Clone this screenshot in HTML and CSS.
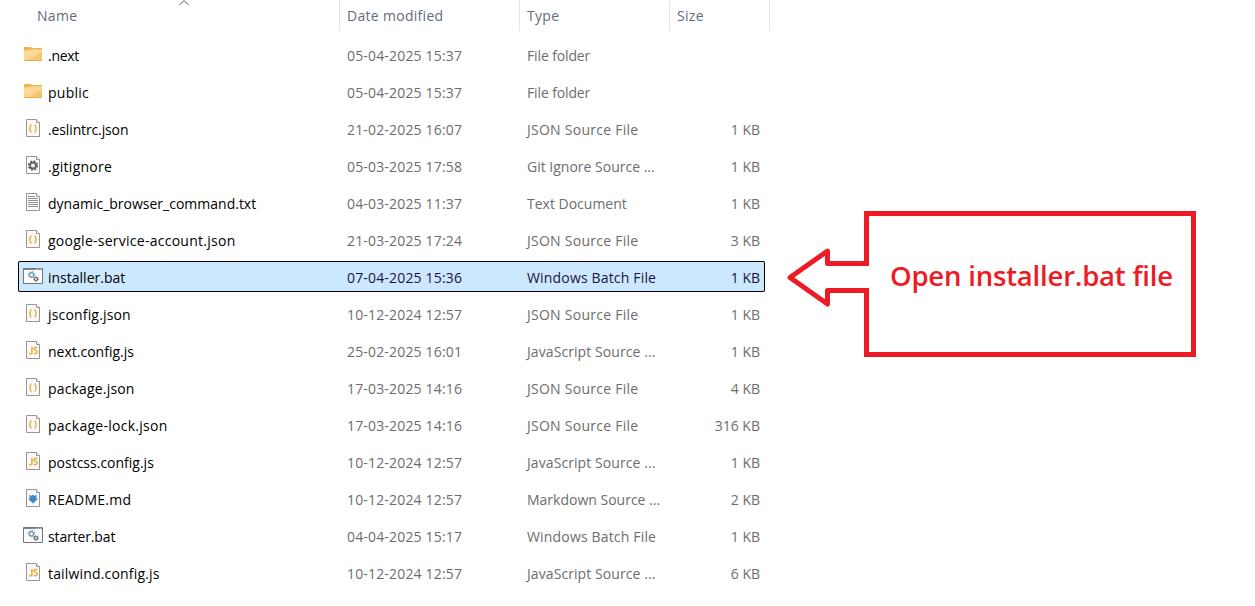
FILE: index.html
```
<!DOCTYPE html>
<html lang="en">
<head>
<meta charset="utf-8">
<title>Files</title>
<link rel="stylesheet" href="styles.css">
</head>
<body>
<svg class="sprite" aria-hidden="true">
  <symbol id="folder" viewBox="0 0 20 18">
    <path d="M1 2h7l1 1h10v13H1z" fill="#f5c869"/>
    <path d="M1 2h7v3H1z" fill="#ecb54d"/>
    <path d="M8 3h11v1.3H8z" fill="#ecb74f"/>
    <path d="M1 6l8-1.500h10V15H1z" fill="#ffd795"/>
    <path d="M19 7v8H5z" fill="#f6c871"/>
    <path d="M1 15h18v1H1z" fill="#e6ad48"/>
  </symbol>
  <symbol id="page" viewBox="0 0 20 18">
    <path d="M3.500.5h10l3 3v14h-13z" fill="#fafafa" stroke="#9a939a"/>
    <path d="M13.500.5v3h3" fill="#fff" stroke="#9a939a"/>
  </symbol>
  <symbol id="json" viewBox="0 0 20 18">
    <use href="#page"/>
    <path d="M8.700 6c-1.500 0-1.300.7-1.300 1.700S7.200 9.400 6.200 9.500c1 .1 1.200.8 1.200 1.800s-.2 1.700 1.300 1.700M11.300 6c1.500 0 1.300.7 1.300 1.700s.2 1.700 1.200 1.800c-1 .1-1.200.8-1.200 1.800s.2 1.700-1.300 1.700" fill="none" stroke="#e6b74a" stroke-width="1.500"/>
  </symbol>
  <symbol id="js" viewBox="0 0 20 18">
    <use href="#page"/>
    <path d="M8.900 6v5.200c0 1.200-.8 1.800-2.900 1.400M14.500 6.800c-3-.9-4 .2-3.300 1.500.6 1 3.300 1 3.100 2.700-.2 1.700-2.100 1.800-3.800 1.300" fill="none" stroke="#e6b74a" stroke-width="1.700"/>
  </symbol>
  <symbol id="gear" viewBox="0 0 20 18">
    <use href="#page"/>
    <circle cx="10" cy="9.500" r="4.300" fill="none" stroke="#5c6469" stroke-width="1.800" stroke-dasharray="1.800 1.577"/>
    <circle cx="10" cy="9.500" r="3" fill="none" stroke="#5c6469" stroke-width="1.900"/>
  </symbol>
  <symbol id="text" viewBox="0 0 20 18">
    <use href="#page"/>
    <path d="M5 3.500h7M5 5.500h10M5 7.500h10M5 9.500h10M5 11.500h10M5 13.500h10" stroke="#919191"/>
  </symbol>
  <symbol id="markdown" viewBox="0 0 20 18">
    <use href="#page"/>
    <path d="M6.500 5.500L8.300 7 10 5.500 11.700 7l1.800-1.500v4.300H15L10 14.500 5 9.800h1.500z" fill="#4387ce"/>
  </symbol>
  <symbol id="batch" viewBox="0 0 20 18">
    <path d="M.5 1.500h19v15H.5z" fill="#fbfbfb" stroke="#73777b"/>
    <path d="M1 2.200h18" stroke="#73777b" stroke-width="1.400"/>
    <path d="M13 2.200h5" stroke="#eee" stroke-dasharray="1 1"/>
    <circle cx="8.500" cy="7.700" r="2.100" fill="none" stroke="#709abb" stroke-width="1.200"/>
    <circle cx="8.500" cy="7.700" r="3" fill="none" stroke="#709abb" stroke-width="1.200" stroke-dasharray="1.200 1.156"/>
    <circle cx="13" cy="12" r="1.500" fill="none" stroke="#5b6268" stroke-width="1.100"/>
    <circle cx="13" cy="12" r="2.300" fill="none" stroke="#5b6268" stroke-dasharray="1 .806"/>
  </symbol>
</svg>
<div class="screen">
  <main class="files">
    <header class="head">
      <span class="head-name">Name<svg class="sort" viewBox="0 0 10 6"><path d="M.5 5L5 .5 9.500 5" fill="none" stroke="#5d5659"/></svg></span>
      <span class="head-date">Date modified</span><span class="head-type">Type</span><span class="head-size">Size</span>
    </header>
    <div class="row"><svg><use href="#folder"/></svg><span class="name tighter">.next</span><span class="date">05-04-2025 15:37</span><span class="type tight">File folder</span><span class="size"></span></div>
    <div class="row"><svg><use href="#folder"/></svg><span class="name wide">public</span><span class="date">05-04-2025 15:37</span><span class="type tight">File folder</span><span class="size"></span></div>
    <div class="row"><svg><use href="#json"/></svg><span class="name tight">.eslintrc.json</span><span class="date">21-02-2025 16:07</span><span class="type wide">JSON Source File</span><span class="size">1 KB</span></div>
    <div class="row"><svg><use href="#gear"/></svg><span class="name wide">.gitignore</span><span class="date">05-03-2025 17:58</span><span class="type">Git Ignore Source ...</span><span class="size">1 KB</span></div>
    <div class="row"><svg><use href="#text"/></svg><span class="name">dynamic_browser_command.txt</span><span class="date">04-03-2025 11:37</span><span class="type">Text Document</span><span class="size">1 KB</span></div>
    <div class="row"><svg><use href="#json"/></svg><span class="name wide">google-service-account.json</span><span class="date">21-03-2025 17:24</span><span class="type wide">JSON Source File</span><span class="size">3 KB</span></div>
    <div class="row selected"><svg><use href="#batch"/></svg><span class="name">installer.bat</span><span class="date">07-04-2025 15:36</span><span class="type loose">Windows Batch File</span><span class="size">1 KB</span></div>
    <div class="row"><svg><use href="#json"/></svg><span class="name loose">jsconfig.json</span><span class="date">10-12-2024 12:57</span><span class="type wide">JSON Source File</span><span class="size">1 KB</span></div>
    <div class="row"><svg><use href="#js"/></svg><span class="name">next.config.js</span><span class="date">25-02-2025 16:01</span><span class="type slight">JavaScript Source ...</span><span class="size">1 KB</span></div>
    <div class="row"><svg><use href="#json"/></svg><span class="name loose">package.json</span><span class="date">17-03-2025 14:16</span><span class="type wide">JSON Source File</span><span class="size">4 KB</span></div>
    <div class="row"><svg><use href="#json"/></svg><span class="name wide">package-lock.json</span><span class="date">17-03-2025 14:16</span><span class="type wide">JSON Source File</span><span class="size">316 KB</span></div>
    <div class="row"><svg><use href="#js"/></svg><span class="name">postcss.config.js</span><span class="date">10-12-2024 12:57</span><span class="type slight">JavaScript Source ...</span><span class="size">1 KB</span></div>
    <div class="row"><svg><use href="#markdown"/></svg><span class="name wide">README.md</span><span class="date">10-12-2024 12:57</span><span class="type">Markdown Source ...</span><span class="size">2 KB</span></div>
    <div class="row"><svg><use href="#batch"/></svg><span class="name tight">starter.bat</span><span class="date">04-04-2025 15:17</span><span class="type loose">Windows Batch File</span><span class="size">1 KB</span></div>
    <div class="row"><svg><use href="#js"/></svg><span class="name loose">tailwind.config.js</span><span class="date">10-12-2024 12:57</span><span class="type slight">JavaScript Source ...</span><span class="size">6 KB</span></div>
  </main>
  <aside class="callout">
    <svg class="outline" viewBox="0 0 410 146"><g fill="none" stroke="#ed1c24" stroke-width="5"><path d="M79.500 55V2.500H406.500V143.500H79.500V77"/><path d="M82 52.500H40.500V40L3 66.500 40.500 93V79.500H82" stroke-linejoin="round"/></g></svg>
    <span class="message">Open installer.bat file</span>
  </aside>
</div>
</body>
</html>
```
FILE: styles.css
```
* { box-sizing: border-box; }
body {
  margin: 0;
  background: #fff;
  color: #6d6d6d;
  font: 14px/20px "Open Sans", "Noto Sans", sans-serif;
}
.sprite { display: none; }
.screen { display: flex; width: 1255px; height: 606px; overflow: hidden; }
.files { width: 770px; flex: none; }
.head {
  display: grid;
  grid-template-columns: 303px 180px 150px 100px;
  height: 31px;
  margin: 0 0 8px 37px;
  color: #646c78;
}
.head span { padding-top: 6px; border-right: 1px solid #e9e3e5; letter-spacing: 0.3px; }
.head .head-date, .head .head-type, .head .head-size { padding-left: 7px; }
.head-name { position: relative; }
.sort { position: absolute; left: 142px; top: 0; width: 10px; height: 6px; }
.row {
  display: grid;
  grid-template-columns: 20px 5px 298px 180px 141px 93px;
  width: 747px;
  height: 31px;
  margin: 0 0 6px 18px;
  padding-left: 5px;
  white-space: nowrap;
}
.row svg { width: 20px; height: 18px; margin-top: 6px; }
.row span { padding-top: 7px; }
.name { grid-column: 3; color: #000; }
.date { padding-left: 1px; letter-spacing: 0.17px; }
.type { padding-left: 1px; }
.size { text-align: right; }
.tighter { letter-spacing: -0.3px; }
.tight { letter-spacing: -0.13px; }
.slight { letter-spacing: 0.08px; }
.loose { letter-spacing: 0.17px; }
.wide { letter-spacing: 0.26px; }
.selected { background: #cce8ff; box-shadow: inset 0 0 0 1px #000; border-radius: 2px; }
.selected .date, .selected .type, .selected .size { color: #20143c; }
.callout { position: relative; width: 410px; height: 146px; margin: 211px 0 0 17px; }
.outline { display: block; width: 410px; height: 146px; }
.message {
  position: absolute;
  left: 103px;
  top: 45px;
  color: #ed1c24;
  font-size: 27.5px;
  font-weight: 600;
  letter-spacing: -0.2px;
  line-height: 40px;
  white-space: nowrap;
}
```
